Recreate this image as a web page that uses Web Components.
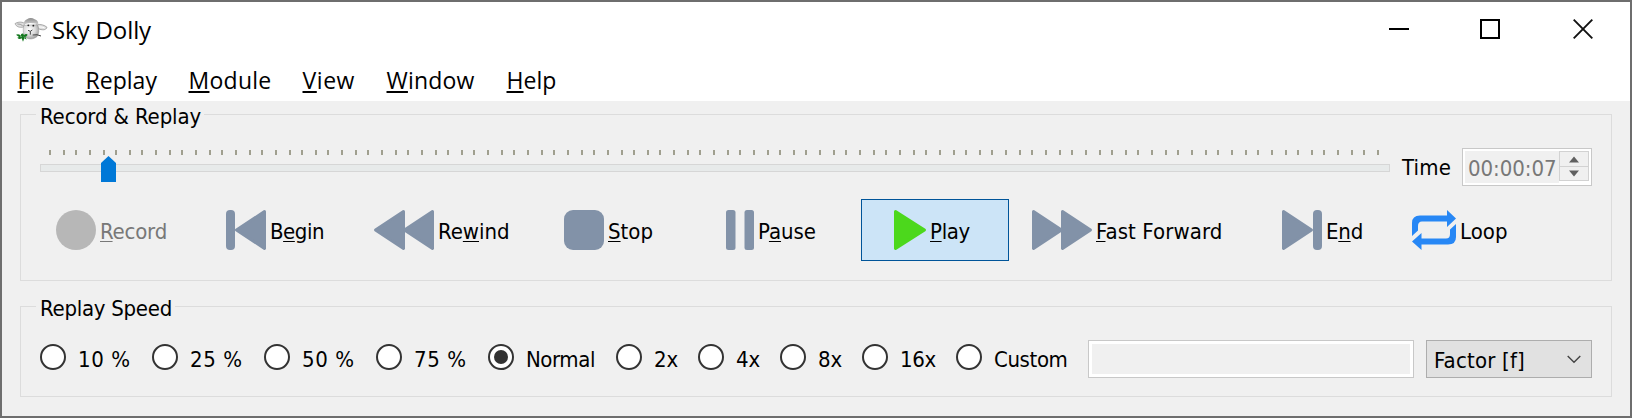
<!DOCTYPE html>
<html lang="en">
<head>
<meta charset="utf-8">
<title>Sky Dolly</title>
<style>
html,body{margin:0;height:100%;overflow:hidden}
body{font-family:"DejaVu Sans Condensed","DejaVu Sans",sans-serif;font-stretch:condensed;font-size:22px;color:#000}
</style>
</head>
<body>
<app-window></app-window>
<script>
class Base extends HTMLElement{
  constructor(){super();this.attachShadow({mode:'open'})}
  attr(n,d=''){return this.getAttribute(n)??d}
  connectedCallback(){this.shadowRoot.innerHTML=this.render()}
}

/* A label with an "_" before its mnemonic letter, tracked to an exact advance width. */
class UiLabel extends Base{
  connectedCallback(){
    super.connectedCallback();
    const s=this.shadowRoot.querySelector('span');
    const w=+this.attr('w','0');
    if(w){
      const n=s.textContent.length;
      s.style.letterSpacing=((w-s.getBoundingClientRect().width)/n)+'px';
    }
  }
  render(){
    const t=this.attr('text').replace('&','&amp;').replace(/_(.)/,'<u>$1</u>');
    return `<style>:host{display:block;flex:none;white-space:pre;line-height:30px;width:${this.attr('w')}px}
    span{display:inline-block}
    u{text-decoration:underline;text-decoration-thickness:var(--u-size,1px);text-underline-offset:var(--u-offset,2px);text-decoration-skip-ink:none}</style><span>${t}</span>`;
  }
}

class TitleBar extends Base{
  render(){return `<style>
  :host{display:flex;height:58px;padding-left:12px;background:#fff;font:24px "Open Sans",sans-serif}
  .logo{width:34px;height:26px;margin:15px 4px 0 0}
  ui-label{margin-top:13px}
  .ctl{display:flex;margin:17px 37px 0 auto;gap:71px}
  .ctl svg{width:20px;height:20px}.ctl svg:last-child{margin-left:2px}
  </style>
  <svg class="logo" viewBox="42 51 102 78">
    <defs><radialGradient id="f" cx=".4" cy=".35" r=".75"><stop offset="0" stop-color="#fff"/><stop offset=".5" stop-color="#dadada"/><stop offset="1" stop-color="#8c8c8c"/></radialGradient>
    <linearGradient id="w" x1="0" y1="0" x2="0" y2="1"><stop offset="0" stop-color="#8c8c8c"/><stop offset="1" stop-color="#d4d4d4"/></linearGradient></defs>
    <path d="M74 70C64 64 52 66 45 71C49 80 58 84 71 81Z" fill="#dedede" stroke="#8c8c8c" stroke-width="2"/>
    <path d="M52 72Q61 71 68 77" fill="none" stroke="#a0a0a0" stroke-width="3"/>
    <path d="M110 74C121 72 134 75 141 82C138 91 127 91 114 86Z" fill="#dedede" stroke="#808080" stroke-width="2"/>
    <path d="M117 81Q127 80 134 84" fill="none" stroke="#fff" stroke-width="3"/>
    <path d="M71 76Q66 103 78 113Q93 122 110 111Q121 98 113 74Z" fill="url(#f)" stroke="#999" stroke-width="1.5"/>
    <path d="M71 74Q72 61 81 58Q92 50 104 58Q116 62 115 75Q107 69 98 70Q86 66 71 74Z" fill="url(#w)"/>
    <circle cx="85" cy="76" r="2.8" fill="#222"/><circle cx="100" cy="77" r="2.8" fill="#222"/>
    <path d="M84 91L91 94L97 90M91 94V104" fill="none" stroke="#444" stroke-width="3"/>
    <path d="M98 105Q112 102 123 108" fill="none" stroke="#444" stroke-width="3"/>
    <path d="M48 104Q57 101 62 107Q63 99 70 101L72 106Q78 99 83 104Q80 110 76 110L80 119L73 115L69 125L65 115Q58 120 52 113L57 111Z" fill="#14781e"/>
    <path d="M60 110L66 110M71 110L75 113" stroke="#bfe0c0" stroke-width="1.5"/>
  </svg>
  <ui-label text="Sky Dolly" w="99"></ui-label>
  <div class="ctl">
   <svg viewBox="0 0 20 20"><path d="M0 10H20" stroke="#000" stroke-width="2"/></svg>
   <svg viewBox="0 0 20 20"><path d="M1 1H19V19H1Z" fill="none" stroke="#000" stroke-width="2"/></svg>
   <svg viewBox="0 0 20 20"><path d="M.7.7L19.3 19.3M19.3.7L.7 19.3" stroke="#111" stroke-width="1.9"/></svg>
  </div>`}
}

class MenuBar extends Base{
  render(){
    const m=[['_File',37,68],['_Replay',71.5,103],['_Module',83,114],['_View',52.5,84],['_Window',88,120],['_Help',50,60]];
    return `<style>:host{display:flex;height:41px;padding-left:15.5px;background:#fff;font:23px "Open Sans",sans-serif;--u-size:2px;--u-offset:2px}
    div{padding-top:5px}</style>`+m.map(([t,w,c])=>`<div style="width:${c}px"><ui-label text="${t}" w="${w}"></ui-label></div>`).join('')}
}

class GroupBox extends Base{
  render(){return `<style>:host{display:block;position:relative;box-sizing:border-box;border:1px solid #dcdcdc}
  .legend{position:absolute;left:15px;top:-13px;padding:0 3px 0 4px;background:#f0f0f0}</style>
  <div class="legend"><ui-label text="${this.attr('label').replace('&','&amp;')}" w="${this.attr('w')}"></ui-label></div><slot></slot>`}
}

class TickSlider extends Base{
  render(){
    let d='';
    for(let i=0;i<=100;i++)d+=`M${10+2*Math.round(i*6.64)} 0v5`;
    return `<style>:host{display:block;width:1350px}svg{display:block}</style>
    <svg width="1350" height="34"><path d="${d}" stroke="#a09f8f" stroke-width="2"/>
    <rect x=".5" y="14.5" width="1349" height="7" fill="#e7eaea" stroke="#d6d6d6"/>
    <path d="M61 13L68.5 6L76 13V32H61Z" fill="#0078d7"/></svg>`}
}

class TimeSpin extends Base{
  render(){return `<style>:host{display:flex;box-sizing:border-box;width:130px;height:38px;border:1px solid #c8c8c8;padding:2px;background:#fff;color:#787878}
  .v{background:#f0f0f0;width:94px;height:32px;padding-left:3px;box-sizing:border-box}
  ui-label{margin-top:3px}
  .b{box-sizing:border-box;width:30px;height:30px;border:1px solid #d2d2d2;background:#f0f0f0}
  svg{display:block}</style><div class="v"><ui-label text="00:00:07" w="88.5"></ui-label></div>
  <div class="b"><svg width="28" height="28"><path d="M0 14.5H28" stroke="#d2d2d2"/><path d="M9 10.5L14 4.5L19 10.5ZM9 18.5L14 24.5L19 18.5Z" fill="#606060"/></svg></div>`}
}

const slate='#8292a8';
const tri=(x,dir)=>dir>0
  ?`<path d="M${x+1.5} 1.5L${x+29.5} 20L${x+1.5} 38.5Z" fill="currentColor" stroke="currentColor" stroke-width="3" stroke-linejoin="round"/>`
  :`<path d="M${x-1.5} 1.5L${x-29.5} 20L${x-1.5} 38.5Z" fill="currentColor" stroke="currentColor" stroke-width="3" stroke-linejoin="round"/>`;
const ICONS={
  record:[40,'#b7b7b7','<circle cx="20" cy="20" r="20" fill="currentColor"/>'],
  begin:[40,slate,'<rect width="9" height="40" rx="4" fill="currentColor"/>'+tri(40,-1)],
  rewind:[60,slate,tri(31,-1)+tri(60,-1)],
  stop:[40,slate,'<rect width="40" height="40" rx="9" fill="currentColor"/>'],
  pause:[28,slate,'<rect width="9.5" height="40" rx="2.5" fill="currentColor"/><rect x="18.5" width="9.5" height="40" rx="2.5" fill="currentColor"/>'],
  play:[32,'#4cd81c',tri(0,1).replace('L29.5','L30.5')],
  forward:[60,slate,tri(0,1)+tri(29,1)],
  end:[40,slate,tri(0,1)+'<rect x="31" width="9" height="40" rx="4" fill="currentColor"/>'],
  loop:[44,'#2787f5','<path d="M0 26V13Q0 5.5 8 5.5H35V0L44 8.5L35 17V11.5H10Q6 11.5 6 16V20.5Z" fill="currentColor"/><path d="M44 14V27Q44 34.5 36 34.5H9.5V40L0 31.5L9.5 23V28.5H34Q38 28.5 38 24V19.5Z" fill="currentColor"/>']
};
class MediaButton extends Base{
  render(){
    const [w,c,p]=ICONS[this.attr('icon')];
    return `<style>:host{display:flex;align-items:center;box-sizing:border-box;height:62px;padding-left:16px;gap:4px}
    :host([checked]){background:#cce4f7;border:1px solid #005499;padding-left:32px;width:148px}
    :host([disabled]){color:#787878}
    svg{flex:none;overflow:visible;color:${c}}ui-label{margin-top:4px}</style>
    <svg width="${w}" height="40">${p}</svg><ui-label text="${this.attr('text')}" w="${this.attr('w')}"></ui-label>`}
}

class RadioOption extends Base{
  render(){return `<style>:host{display:flex;gap:12px}
  i{box-sizing:border-box;width:26px;height:26px;border:2px solid #333;border-radius:50%;background:#fff;display:grid;place-items:center;flex:none}
  :host([checked]) i::after{content:"";width:14px;height:14px;border-radius:50%;background:#333}
  ui-label{margin-top:.6px}</style><i></i><ui-label text="${this.attr('text')}" w="${this.attr('w')}"></ui-label>`}
}

class LineEdit extends Base{
  render(){return `<style>:host{display:block;box-sizing:border-box;width:326px;height:38px;border:1px solid #c8c8c8;background:#fff;padding:3px}
  div{height:30px;background:#f0f0f0}</style><div></div>`}
}
class ComboBox extends Base{
  render(){return `<style>:host{display:flex;box-sizing:border-box;width:166px;height:38px;border:1px solid #adadad;background:#e1e1e1;padding:5px 10px 0 7px;justify-content:space-between}
  svg{margin-top:9px}</style><ui-label text="Factor [f]" w="91"></ui-label>
  <svg width="14" height="9"><path d="M.7 1L7 7.3L13.3 1" fill="none" stroke="#444" stroke-width="1.4"/></svg>`}
}

class AppWindow extends Base{
  render(){
    const b=[['record','_Record',67,'disabled'],['begin','B_egin',54],['rewind','Re_wind',71.5],['stop','_Stop',45],['pause','P_ause',58],['play','_Play',40,'checked'],['forward','_Fast Forward',126.5],['end','E_nd',37],['loop','Loop',47.5]];
    const r=[['10 %',52.5],['25 %',52.5],['50 %',52.5],['75 %',52.5],['Normal',69],['2x',24],['4x',24],['8x',24],['16x',36],['Custom',73.5]];
    r[4].push('checked');
    return `<style>
    :host{display:block;box-sizing:border-box;width:1632px;height:418px;border:2px solid #6e6e6e;background:#f0f0f0}
    main{padding:13px 18px 0}
    group-box.a{height:167px;margin-bottom:25px}group-box.b{height:91px}
    .time{display:flex;padding:33px 0 0 19px}
    tick-slider{margin-top:2px}
    .time ui-label{margin:5px 11px 0 12px}
    .buttons{display:grid;grid-template-columns:170px 148px 190px 162px 151px 155px 250px 130px 150px;padding:13px 0 0 19px}
    .speed{display:grid;grid-template-columns:112px 112px 112px 112px 128px 82px 82px 82px 94px 132px 338px 166px;padding:33px 0 0 19px}
    radio-option{margin-top:4px}
    </style>
    <title-bar></title-bar><menu-bar></menu-bar>
    <main>
      <group-box class="a" label="Record &amp; Replay" w="161">
        <div class="time"><tick-slider></tick-slider><ui-label text="Time" w="49"></ui-label><time-spin></time-spin></div>
        <div class="buttons">${b.map(([i,t,w,s=''])=>`<media-button icon="${i}" text="${t}" w="${w}" ${s}></media-button>`).join('')}</div>
      </group-box>
      <group-box class="b" label="Replay Speed" w="132">
        <div class="speed">${r.map(([t,w,s=''])=>`<radio-option text="${t}" w="${w}" ${s}></radio-option>`).join('')}<line-edit></line-edit><combo-box></combo-box></div>
      </group-box>
    </main>`}
}
customElements.define('app-window',AppWindow);
customElements.define('title-bar',TitleBar);
customElements.define('menu-bar',MenuBar);
customElements.define('group-box',GroupBox);
customElements.define('tick-slider',TickSlider);
customElements.define('time-spin',TimeSpin);
customElements.define('media-button',MediaButton);
customElements.define('radio-option',RadioOption);
customElements.define('line-edit',LineEdit);
customElements.define('combo-box',ComboBox);
/* Labels are measured against inherited fonts, so they are upgraded once every host is in place. */
customElements.define('ui-label',UiLabel);
</script>
</body>
</html>
